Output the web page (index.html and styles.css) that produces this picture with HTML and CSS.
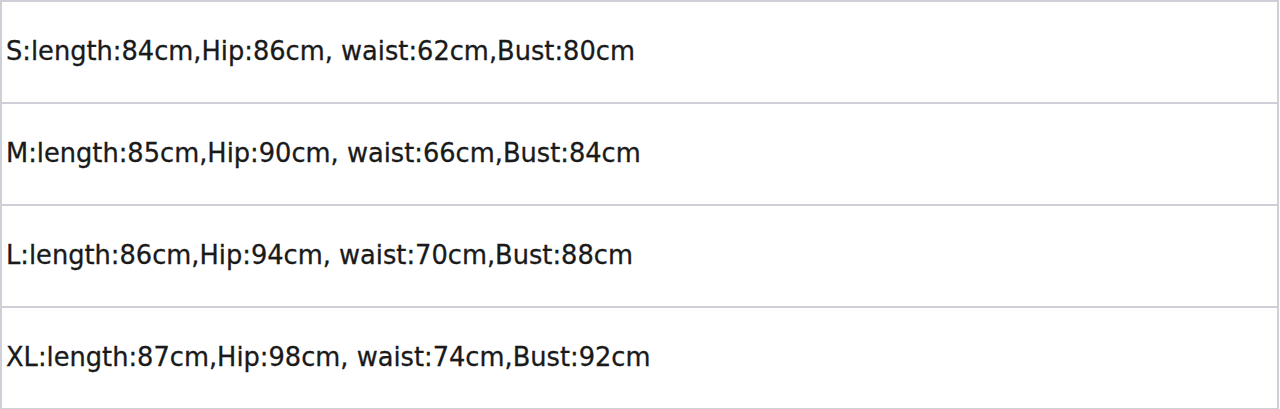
FILE: index.html
```html
<!DOCTYPE html>
<html>
<head>
<meta charset="utf-8">
<link rel="stylesheet" href="styles.css">
</head>
<body>
<table class="size-table">
  <tr><td>S:length:84cm,Hip:86cm, waist:62cm,Bust:80cm</td></tr>
  <tr><td>M:length:85cm,Hip:90cm, waist:66cm,Bust:84cm</td></tr>
  <tr><td>L:length:86cm,Hip:94cm, waist:70cm,Bust:88cm</td></tr>
  <tr><td>XL:length:87cm,Hip:98cm, waist:74cm,Bust:92cm</td></tr>
</table>
</body>
</html>
```

FILE: styles.css
```css
html, body {
  margin: 0;
  padding: 0;
  background: #ffffff;
}
.size-table {
  width: 1279px;
  border-collapse: collapse;
  font-family: "DejaVu Sans", Verdana, sans-serif;
  font-size: 25.7px;
  color: #1a1a1a;
  -webkit-text-stroke: 0.3px #1a1a1a;
}
.size-table td {
  height: 102px;
  padding: 0 0 2px 4px;
  border: 2px solid #cfcfd8;
  box-sizing: border-box;
  vertical-align: middle;
}
```
